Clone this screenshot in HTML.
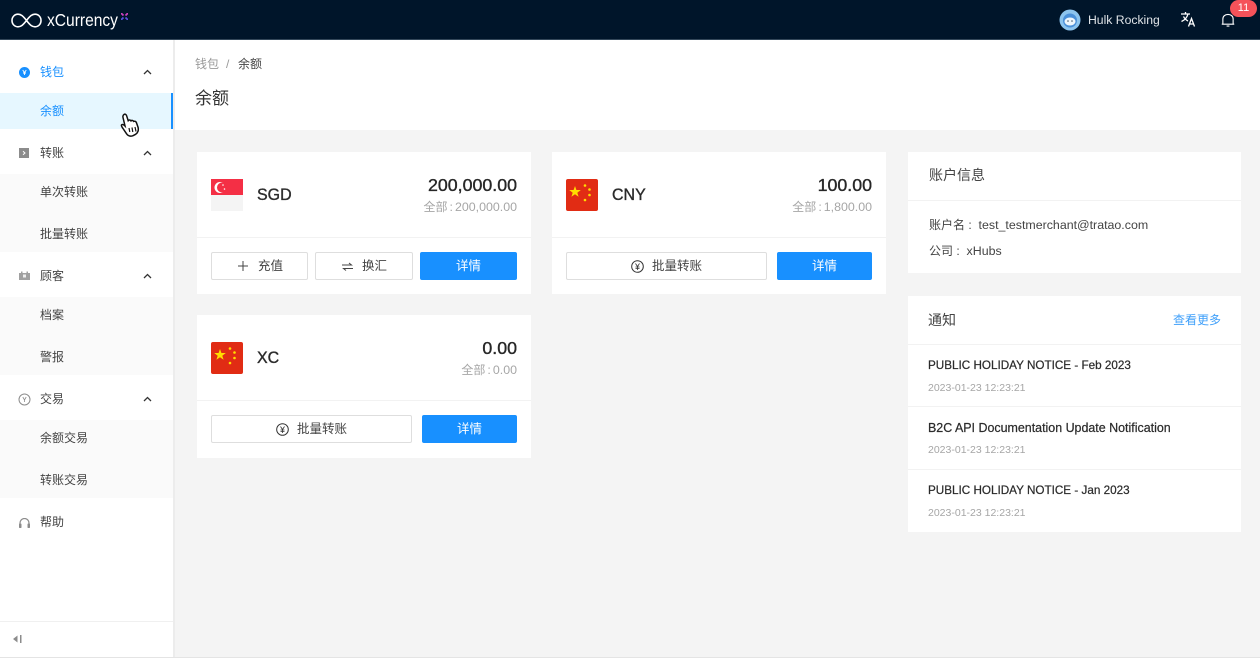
<!DOCTYPE html>
<html><head><meta charset="utf-8">
<style>
*{box-sizing:border-box;margin:0;padding:0}
html,body{width:1260px;height:658px;overflow:hidden;background:#f4f4f4;font-family:"Liberation Sans","Noto Sans CJK SC",sans-serif;color:#333}
.a{position:absolute}
.t{position:absolute;white-space:nowrap;line-height:20px;height:20px}
.card{position:absolute;background:#fff}
.line{position:absolute;height:1px;background:#f2f2f2;left:0;right:0}
.btn{position:absolute;height:28px;border:1px solid #dedede;border-radius:2px;background:#fff;font-size:12.5px;line-height:26px;text-align:center;color:#444;white-space:nowrap}
.btn.p{background:#1890ff;border-color:#1890ff;color:#fff}
.btn svg{position:absolute}
.btn span{position:absolute;top:0}
.sub{position:absolute;left:0;width:173px;background:#fafafa}
.m{position:absolute;left:40px;font-size:12px;line-height:20px;color:#444;white-space:nowrap}
.r{position:absolute;white-space:nowrap;text-align:right}
.cur{font-size:17px;line-height:24px;color:#2b2b2b;-webkit-text-stroke:.35px #2b2b2b;transform:scaleX(.94);transform-origin:0 50%}
.amt{font-size:17.800px;line-height:22px;color:#262626;-webkit-text-stroke:.35px #262626}
.tot{font-size:12.400px;line-height:16px;color:#a6a6a6}
.tot b{font-weight:400;font-size:12px}
.tot i{font-style:normal;margin:0 2px}
.ch{position:absolute;left:143px}
.ntitle{position:absolute;left:20px;font-size:11.700px;line-height:18px;color:#2b2b2b;white-space:nowrap;-webkit-text-stroke:.22px #2b2b2b}
.ndate{position:absolute;left:20px;font-size:10.500px;line-height:14px;color:#a6a6a6;white-space:nowrap}
</style></head><body>

<!-- header -->
<div class="a" style="left:0;top:0;width:1260px;height:40px;background:#00152a;border-bottom:1px solid #33475a"></div>
<svg class="a" style="left:11px;top:13px" width="31" height="15" viewBox="0 0 31 15" fill="none" stroke="#fff" stroke-width="1.600"><path d="M15.500 7.500C12 3 10 1.200 7 1.200 3.600 1.200 1 3.900 1 7.500s2.600 6.300 6 6.300c3 0 5-1.800 8.500-6.300 3.500-4.500 5.500-6.300 8.500-6.300 3.400 0 6 2.700 6 6.300s-2.600 6.300-6 6.300c-3 0-5-1.800-8.500-6.300z"/></svg>
<div class="t" style="left:47px;top:9px;font-size:17.500px;line-height:22px;height:22px;color:#fff;transform:scaleX(.89);transform-origin:0 50%">xCurrency</div>
<svg class="a" style="left:121px;top:13px" width="7" height="7" viewBox="0 0 7 7"><path d="M0 0l2.500 2.500M7 0L4.500 2.500" stroke="#d040c0" stroke-width="1.700"/><path d="M0 7l2.500-2.500M7 7L4.500 4.500" stroke="#5a50e0" stroke-width="1.700"/></svg>
<svg class="a" style="left:1059px;top:9px" width="22" height="22" viewBox="0 0 22 22"><circle cx="11" cy="11" r="10.500" fill="#8cc4ee"/><circle cx="11" cy="11.500" r="7" fill="#4a90d9"/><ellipse cx="11" cy="12.500" rx="5.500" ry="4" fill="#eef6fc"/><circle cx="9" cy="12" r=".8" fill="#456"/><circle cx="13" cy="12" r=".8" fill="#456"/></svg>
<div class="t" style="left:1088px;top:10px;font-size:12.200px;color:#dfe3e7">Hulk Rocking</div>
<svg class="a" style="left:1180px;top:11px" width="17" height="17" viewBox="0 0 17 17" fill="none" stroke="#fff" stroke-width="1.300"><path d="M1 3h9M5.500 1v2M8 3c-.8 3-3 6-6.500 7.500M3.500 5.500c1 2 2.500 3.500 4.500 4.500M8.500 15.500l3-8 3 8M9.700 13h3.600"/></svg>
<svg class="a" style="left:1221px;top:12px" width="14" height="16" viewBox="0 0 15 16" fill="none" stroke="#fff" stroke-width="1.200"><path d="M2 12V7c0-3 2.300-5 5.500-5S13 4 13 7v5M.8 12.500h13.400M6 14.500h3"/></svg>
<div class="a" style="left:1230px;top:0;width:27px;height:17px;border-radius:9px;background:#f5525a;color:#fff;font-size:11px;line-height:17px;text-align:center">11</div>

<!-- sidebar -->
<div class="a" style="left:173px;top:40px;width:2px;height:617px;background:#ececec"></div>
<div class="a" style="left:0;top:40px;width:173px;height:617px;background:#fff"></div>
<div class="a" style="left:0;top:93px;width:173px;height:36px;background:#e6f7ff"></div>
<div class="a" style="left:171px;top:93px;width:2px;height:36px;background:#1890ff"></div>
<div class="sub" style="top:174px;height:78px"></div>
<div class="sub" style="top:297px;height:78px"></div>
<div class="sub" style="top:420px;height:78px"></div>

<svg class="a" style="left:19px;top:67px" width="11" height="11" viewBox="0 0 11 11"><circle cx="5.500" cy="5.500" r="5.500" fill="#1890ff"/><path d="M3.700 3l1.800 2.500L7.300 3M5.500 5.500V8M4 6h3" stroke="#fff" stroke-width=".9" fill="none"/></svg>
<div class="m" style="top:62px;color:#1890ff">钱包</div>
<div class="m" style="top:101px;color:#1890ff">余额</div>
<svg class="a" style="left:19px;top:148px" width="10" height="10" viewBox="0 0 10 10"><rect width="10" height="10" fill="#8c8c8c"/><path d="M4 3.200L6 5 4 6.800" stroke="#fff" fill="none"/></svg>
<div class="m" style="top:143px">转账</div>
<div class="m" style="top:182px">单次转账</div>
<div class="m" style="top:224px">批量转账</div>
<svg class="a" style="left:19px;top:271px" width="11" height="10" viewBox="0 0 11 10"><rect y="2" width="11" height="7" fill="#a0a0a0"/><rect x="2" y="0.500" width="1.500" height="2" fill="#a0a0a0"/><rect x="7.500" y="0.500" width="1.500" height="2" fill="#a0a0a0"/><rect x="4" y="3.500" width="3" height="3" fill="#eee"/></svg>
<div class="m" style="top:266px">顾客</div>
<div class="m" style="top:305px">档案</div>
<div class="m" style="top:347px">警报</div>
<svg class="a" style="left:18px;top:393px" width="13" height="13" viewBox="0 0 13 13" fill="none" stroke="#8c8c8c"><circle cx="6.500" cy="6.500" r="5.500"/><path d="M4.800 4l1.700 3 1.700-3M6.500 7v2" stroke-width=".8"/></svg>
<div class="m" style="top:389px">交易</div>
<div class="m" style="top:428px">余额交易</div>
<div class="m" style="top:470px">转账交易</div>
<svg class="a" style="left:19px;top:518px" width="11" height="10" viewBox="0 0 11 10" fill="none"><path d="M1 8V5a4.500 4.500 0 019 0v3" stroke="#8c8c8c" stroke-width="1.200"/><rect x="0" y="5.500" width="2.500" height="4.500" rx=".8" fill="#8c8c8c"/><rect x="8.500" y="5.500" width="2.500" height="4.500" rx=".8" fill="#8c8c8c"/></svg>
<div class="m" style="top:512px">帮助</div>

<svg class="ch" style="top:69px" width="9" height="6" viewBox="0 0 9 6" fill="none" stroke="#333" stroke-width="1.300"><path d="M1 5l3.500-3.500L8 5"/></svg>
<svg class="ch" style="top:150px" width="9" height="6" viewBox="0 0 9 6" fill="none" stroke="#333" stroke-width="1.300"><path d="M1 5l3.500-3.500L8 5"/></svg>
<svg class="ch" style="top:273px" width="9" height="6" viewBox="0 0 9 6" fill="none" stroke="#333" stroke-width="1.300"><path d="M1 5l3.500-3.500L8 5"/></svg>
<svg class="ch" style="top:396px" width="9" height="6" viewBox="0 0 9 6" fill="none" stroke="#333" stroke-width="1.300"><path d="M1 5l3.500-3.500L8 5"/></svg>

<div class="a" style="left:0;top:621px;width:173px;height:1px;background:#f0f0f0"></div>
<svg class="a" style="left:13px;top:635px" width="10" height="8" viewBox="0 0 10 8"><path d="M0 4l4.500-3.500v7z" fill="#8c8c8c"/><rect x="7" y="0" width="1.500" height="8" fill="#8c8c8c"/></svg>
<div class="a" style="left:0;top:657px;width:1260px;height:1px;background:#e4e4e4"></div>

<!-- cursor -->
<svg class="a" style="left:120px;top:113px" width="21" height="24" viewBox="0 0 21 24"><path d="M4 1.500c1.200-.8 2.200 0 2.600 1.200l1.600 5c.8-1 2.200-.8 2.800.2.800-.8 2.200-.5 2.700.5.900-.5 2.200 0 2.700 1.200l1.600 4.500c.9 3-.2 6-2.400 7.200l-2.600 1.400c-2.500 1-5 .2-6.500-2L3 15.500C2 14 1 13 1.500 12c.6-1 2-.5 3.500 1l-2-8.500C2.700 3.300 3 2.200 4 1.500z" fill="#fff" stroke="#111" stroke-width="1.500"/><path d="M9 15l.8 4M12 14.500l.8 4.500M15 14l1 4.500" stroke="#111" stroke-width="1.200"/></svg>

<!-- page head -->
<div class="a" style="left:175px;top:40px;width:1085px;height:90px;background:#fff"></div>
<div class="t" style="left:195px;top:54px;font-size:12px;color:#999">钱包</div>
<div class="t" style="left:226px;top:54px;font-size:12px;color:#999">/</div>
<div class="t" style="left:238px;top:54px;font-size:12px;color:#444">余额</div>
<div class="t" style="left:195px;top:89px;font-size:17px;color:#333">余额</div>

<!-- SGD -->
<div class="card" style="left:197px;top:152px;width:334px;height:142px">
  <div class="line" style="top:85px"></div>
  <svg class="a" style="left:14px;top:27px" width="32" height="32" viewBox="0 0 32 32"><rect width="32" height="16" fill="#f42f45"/><rect y="16" width="32" height="16" fill="#f4f4f4"/><circle cx="9" cy="8.500" r="5.500" fill="#fff"/><circle cx="11" cy="8.500" r="5" fill="#f42f45"/><circle cx="12" cy="6" r=".8" fill="#fff"/><circle cx="13.500" cy="10" r=".8" fill="#fff"/></svg>
  <div class="t cur" style="left:60px;top:31px;height:24px">SGD</div>
  <div class="r amt" style="right:14px;top:22px">200,000.00</div>
  <div class="r tot" style="right:14px;top:47px"><b>全部</b><i>:</i>200,000.00</div>
  <div class="btn" style="left:14px;top:100px;width:97px"><svg style="left:26px;top:8px" width="10" height="10" viewBox="0 0 10 10" stroke="#444" fill="none"><path d="M5 0v10M0 5h10"/></svg><span style="left:46px">充值</span></div>
  <div class="btn" style="left:118px;top:100px;width:98px"><svg style="left:26px;top:9px" width="11" height="9" viewBox="0 0 11 9" stroke="#444" fill="none"><path d="M0 3h9.500L7 1M11 6.500H1.500L4 8.500"/></svg><span style="left:46px">换汇</span></div>
  <div class="btn p" style="left:223px;top:100px;width:97px">详情</div>
</div>

<!-- CNY -->
<div class="card" style="left:552px;top:152px;width:334px;height:142px">
  <div class="line" style="top:85px"></div>
  <svg class="a" style="left:14px;top:27px" width="32" height="32" viewBox="0 0 32 32"><rect width="32" height="32" rx="2" fill="#e12c14"/><polygon points="9,7 10.400,11 14.800,11 11.300,13.700 12.600,17.800 9,15.300 5.400,17.800 6.700,13.700 3.200,11 7.600,11" fill="#ffde00"/><circle cx="19" cy="6.500" r="1.300" fill="#ffde00"/><circle cx="23.500" cy="10.500" r="1.300" fill="#ffde00"/><circle cx="23.500" cy="16" r="1.300" fill="#ffde00"/><circle cx="19" cy="21" r="1.300" fill="#ffde00"/></svg>
  <div class="t cur" style="left:60px;top:31px;height:24px">CNY</div>
  <div class="r amt" style="right:14px;top:22px">100.00</div>
  <div class="r tot" style="right:14px;top:47px"><b>全部</b><i>:</i>1,800.00</div>
  <div class="btn" style="left:14px;top:100px;width:201px"><svg style="left:64px;top:7px" width="13" height="13" viewBox="0 0 13 13" fill="none" stroke="#333"><circle cx="6.500" cy="6.500" r="5.800"/><path d="M4.500 3.500l2 3 2-3M6.500 6.500V10M4.500 7h4M4.500 8.500h4" stroke-width=".8"/></svg><span style="left:85px">批量转账</span></div>
  <div class="btn p" style="left:225px;top:100px;width:95px">详情</div>
</div>

<!-- XC -->
<div class="card" style="left:197px;top:315px;width:334px;height:143px">
  <div class="line" style="top:85px"></div>
  <svg class="a" style="left:14px;top:27px" width="32" height="32" viewBox="0 0 32 32"><rect width="32" height="32" rx="2" fill="#e12c14"/><polygon points="9,7 10.400,11 14.800,11 11.300,13.700 12.600,17.800 9,15.300 5.400,17.800 6.700,13.700 3.200,11 7.600,11" fill="#ffde00"/><circle cx="19" cy="6.500" r="1.300" fill="#ffde00"/><circle cx="23.500" cy="10.500" r="1.300" fill="#ffde00"/><circle cx="23.500" cy="16" r="1.300" fill="#ffde00"/><circle cx="19" cy="21" r="1.300" fill="#ffde00"/></svg>
  <div class="t cur" style="left:60px;top:31px;height:24px">XC</div>
  <div class="r amt" style="right:14px;top:22px">0.00</div>
  <div class="r tot" style="right:14px;top:47px"><b>全部</b><i>:</i>0.00</div>
  <div class="btn" style="left:14px;top:100px;width:201px"><svg style="left:64px;top:7px" width="13" height="13" viewBox="0 0 13 13" fill="none" stroke="#333"><circle cx="6.500" cy="6.500" r="5.800"/><path d="M4.500 3.500l2 3 2-3M6.500 6.500V10M4.500 7h4M4.500 8.500h4" stroke-width=".8"/></svg><span style="left:85px">批量转账</span></div>
  <div class="btn p" style="left:225px;top:100px;width:95px">详情</div>
</div>

<!-- account info -->
<div class="card" style="left:908px;top:152px;width:333px;height:121px">
  <div class="line" style="top:48px"></div>
  <div class="t" style="left:21px;top:13px;font-size:14px;color:#444">账户信息</div>
  <div class="t" style="left:21px;top:63px;font-size:12.400px;color:#444"><span style="font-size:12px">账户名 :</span>&nbsp; test_testmerchant@tratao.com</div>
  <div class="t" style="left:21px;top:89px;font-size:12.400px;color:#444"><span style="font-size:12px">公司 :</span>&nbsp; xHubs</div>
</div>

<!-- notices -->
<div class="card" style="left:908px;top:296px;width:333px;height:236px">
  <div class="line" style="top:48px"></div>
  <div class="line" style="top:110px"></div>
  <div class="line" style="top:173px"></div>
  <div class="t" style="left:20px;top:14px;font-size:14px;color:#444">通知</div>
  <div class="t" style="right:20px;top:14px;font-size:12px;color:#40a0fa">查看更多</div>
  <div class="ntitle" style="top:61px">PUBLIC HOLIDAY NOTICE - Feb 2023</div>
  <div class="ndate" style="top:85px">2023-01-23 12:23:21</div>
  <div class="ntitle" style="top:123px;font-size:12.450px">B2C API Documentation Update Notification</div>
  <div class="ndate" style="top:147px">2023-01-23 12:23:21</div>
  <div class="ntitle" style="top:186px">PUBLIC HOLIDAY NOTICE - Jan 2023</div>
  <div class="ndate" style="top:210px">2023-01-23 12:23:21</div>
</div>
</body></html>
